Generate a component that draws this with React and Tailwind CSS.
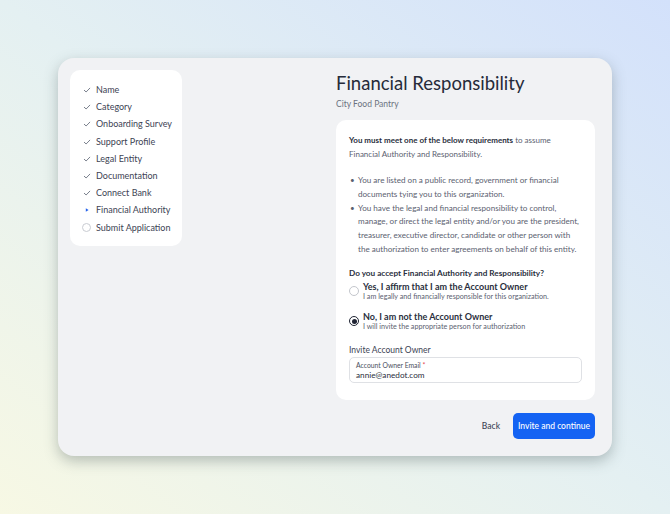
import React from "react";

const steps = [
  { label: "Name", state: "done" },
  { label: "Category", state: "done" },
  { label: "Onboarding Survey", state: "done" },
  { label: "Support Profile", state: "done" },
  { label: "Legal Entity", state: "done" },
  { label: "Documentation", state: "done" },
  { label: "Connect Bank", state: "done" },
  { label: "Financial Authority", state: "current" },
  { label: "Submit Application", state: "todo" },
];

const StepIcon = ({ state }) => {
  if (state === "done") {
    return (
      <svg width="8" height="8" viewBox="0 0 8 8" className="text-[#6b7280]">
        <path d="M1.3 4.3 L3.1 6 L6.8 2.2" fill="none" stroke="currentColor" strokeWidth="0.9" strokeLinecap="round" strokeLinejoin="round" />
      </svg>
    );
  }
  if (state === "current") {
    return (
      <svg width="8" height="8" viewBox="0 0 8 8">
        <path d="M2.8 2.2 L5.6 4 L2.8 5.8 Z" fill="#2563eb" />
      </svg>
    );
  }
  return <span className="block w-[9px] h-[9px] rounded-full border border-[#c9ccd2]" />;
};

const Radio = ({ checked }) =>
  checked ? (
    <span className="flex items-center justify-center w-[10px] h-[10px] rounded-full border border-[#1f2433] shrink-0">
      <span className="block w-[5px] h-[5px] rounded-full bg-[#1f2433]" />
    </span>
  ) : (
    <span className="block w-[10px] h-[10px] rounded-full border border-[#c3c6cc] bg-white shrink-0" />
  );

export default function App() {
  return (
    <div
      className="w-[670px] h-[514px] overflow-hidden bg-[linear-gradient(to_top_right,#f7f8e4_0%,#e4f0f2_50%,#d3e1fb_100%)]"
      style={{ fontFamily: "Lato, 'Noto Sans', sans-serif" }}
    >
      <div className="pt-[58px] pl-[58px]">
        <div className="w-[554px] h-[398px] rounded-[16px] bg-[#f1f2f4] shadow-[0_5px_14px_rgba(70,85,85,0.35)] flex justify-between pl-[12px] pr-[17px] pt-[12px] text-[#3d4354]">
          <div className="w-[112px] h-[176px] bg-white rounded-[10px] pt-[14px] pl-[12px] flex flex-col gap-[5.2px]">
            {steps.map((s) => (
              <div key={s.label} className="flex items-center gap-[5px] h-[12px]">
                <span className="w-[9px] flex items-center justify-center">
                  <StepIcon state={s.state} />
                </span>
                <span className="text-[9px] leading-[12px] text-[#3d4354]">{s.label}</span>
              </div>
            ))}
          </div>

          <div className="w-[259px] flex flex-col">
            <h1 className="text-[18.5px] leading-[24px] text-[#262b3a] mt-[1px]">Financial Responsibility</h1>
            <p className="text-[8.5px] leading-[12px] text-[#6b7280] mt-[3px]">City Food Pantry</p>

            <div className="mt-[10px] h-[280px] bg-white rounded-[10px] px-[13px] pt-[13px]">
              <p className="text-[8px] leading-[14px] text-[#5b6170]">
                <span className="font-bold text-[#2a2f3d]">You must meet one of the below requirements</span> to
                assume Financial Authority and Responsibility.
              </p>
              <ul className="mt-[13px] text-[8.1px] leading-[13.8px] text-[#5b6170] pr-[2px]">
                <li className="flex">
                  <span className="w-[9px] shrink-0 pl-[1px]">•</span>
                  <span>You are listed on a public record, government or financial documents tying you to this organization.</span>
                </li>
                <li className="flex">
                  <span className="w-[9px] shrink-0 pl-[1px]">•</span>
                  <span>
                    You have the legal and financial responsibility to control, manage, or direct the legal entity and/or
                    you are the president, treasurer, executive director, candidate or other person with the authorization
                    to enter agreements on behalf of this entity.
                  </span>
                </li>
              </ul>

              <p className="mt-[10px] text-[8.2px] leading-[12px] font-bold text-[#2a2f3d]">
                Do you accept Financial Authority and Responsibility?
              </p>

              <div className="mt-[2px] flex items-center gap-[4px]">
                <Radio checked={false} />
                <div>
                  <div className="text-[9px] leading-[11px] font-bold text-[#2a2f3d]">Yes, I affirm that I am the Account Owner</div>
                  <div className="text-[7.2px] leading-[10px] text-[#5b6170]">I am legally and financially responsible for this organization.</div>
                </div>
              </div>

              <div className="mt-[9px] flex items-center gap-[4px]">
                <Radio checked />
                <div>
                  <div className="text-[9px] leading-[11px] font-bold text-[#2a2f3d]">No, I am not the Account Owner</div>
                  <div className="text-[7.2px] leading-[10px] text-[#5b6170]">I will invite the appropriate person for authorization</div>
                </div>
              </div>

              <p className="mt-[12px] text-[8.5px] leading-[12px] text-[#3d4354]">Invite Account Owner</p>
              <div className="mt-[1px] border border-[#dfe1e5] rounded-[5px] h-[26px] px-[6px] pt-[3px]">
                <div className="text-[6.8px] leading-[9px] text-[#4b5160]">
                  Account Owner Email <span className="text-[#e5484d]">*</span>
                </div>
                <div className="text-[8.2px] leading-[11px] text-[#2a2f3d]">annie@anedot.com</div>
              </div>
            </div>

            <div className="mt-[13px] flex items-center justify-end gap-[13px]">
              <button className="text-[8.5px] text-[#3d4354] font-medium">Back</button>
              <button className="w-[82px] h-[26px] rounded-[5px] bg-[#1463f3] text-white text-[8.5px] font-medium">
                Invite and continue
              </button>
            </div>
          </div>
        </div>
      </div>
    </div>
  );
}
